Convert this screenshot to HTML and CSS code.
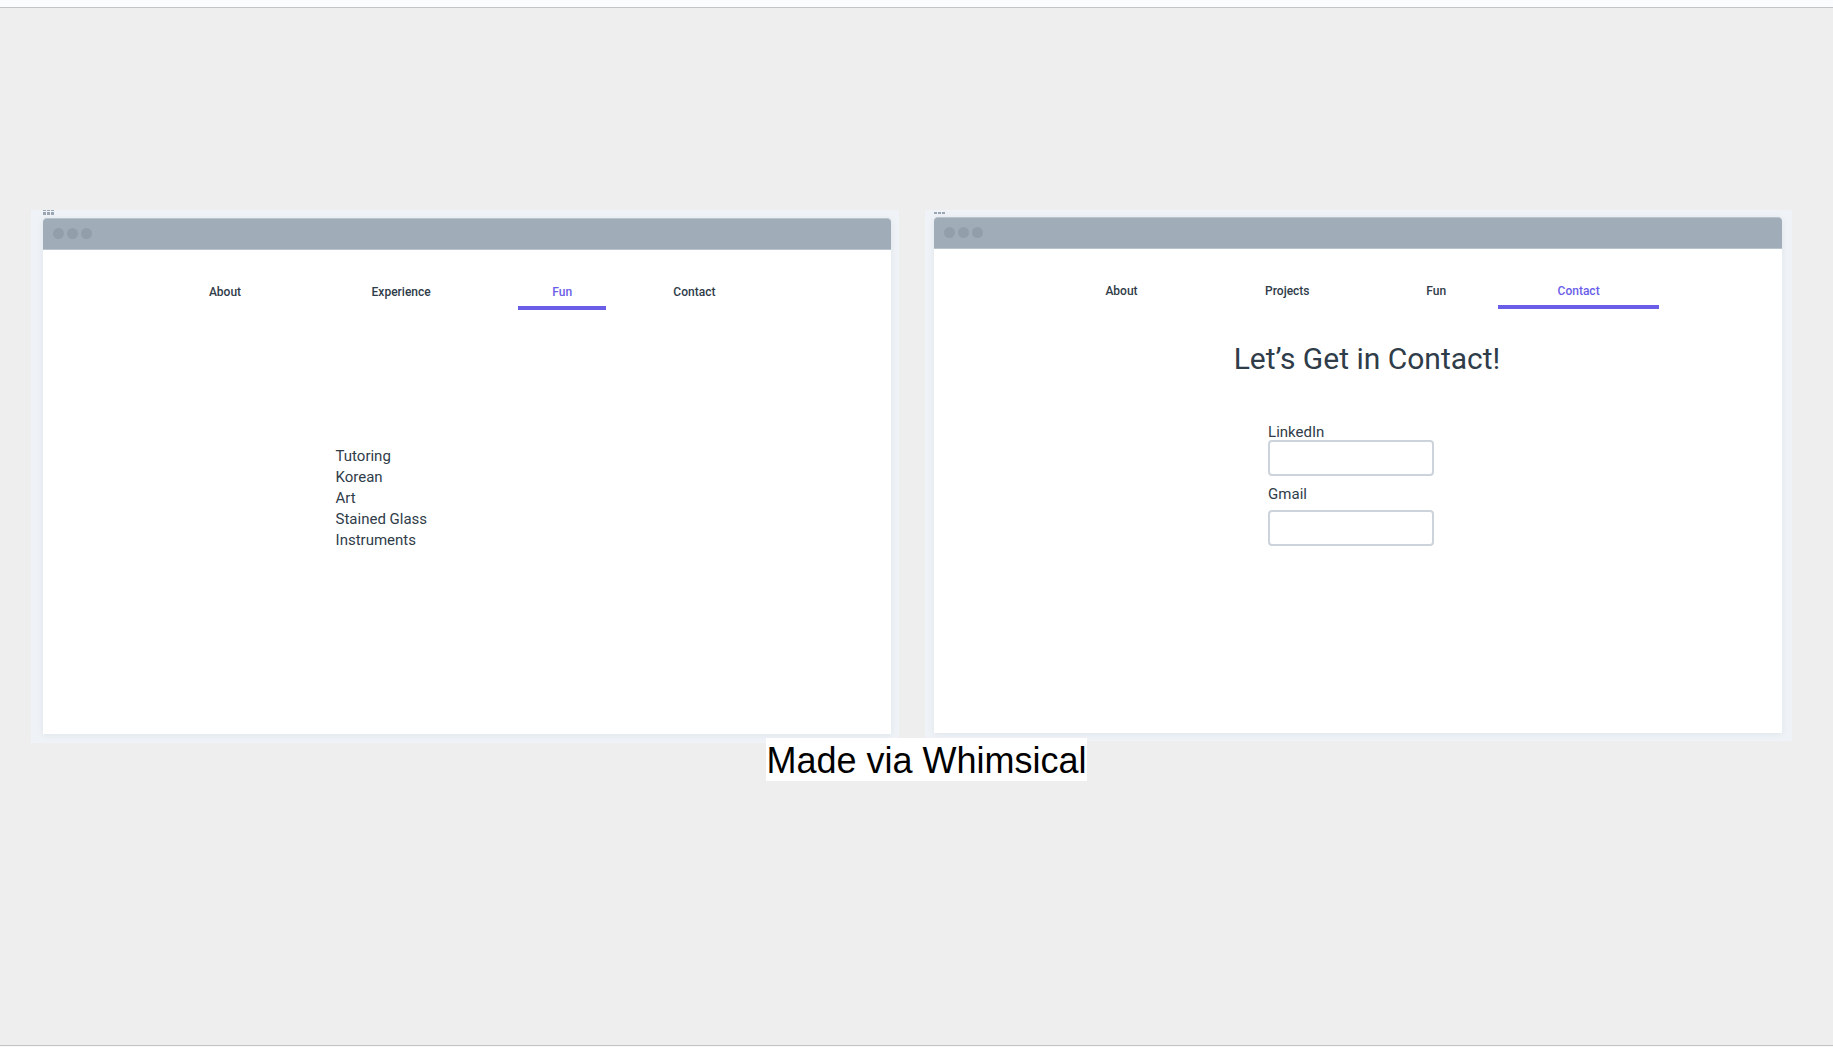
FILE: index.html
```html
<!DOCTYPE html>
<html lang="en">
<head>
<meta charset="utf-8">
<title>Portfolio wireframes</title>
<link rel="stylesheet" href="styles.css">
</head>
<body>
<main class="slide">
  <div class="boards">
    <section class="board board-fun">
      <svg class="handle" width="12" height="8" viewBox="0 0 12 8" aria-hidden="true">
        <path d="M0 0h3v1H0zM4 0h3v1H4zM8 0h3v1H8zM0 2h3v3H0zM4 2h3v3H4zM8 2h3v3H8z"/>
      </svg>
      <div class="window">
        <div class="titlebar"><i class="dot"></i><i class="dot"></i><i class="dot"></i></div>
        <nav class="tabs tabs-fun">
          <a class="tab" href="#about">About</a>
          <a class="tab" href="#experience">Experience</a>
          <a class="tab active" href="#fun">Fun</a>
          <a class="tab" href="#contact">Contact</a>
        </nav>
        <ul class="hobbies">
          <li>Tutoring</li>
          <li>Korean</li>
          <li>Art</li>
          <li>Stained Glass</li>
          <li>Instruments</li>
        </ul>
      </div>
    </section>
    <section class="board board-contact">
      <svg class="handle" width="12" height="7" viewBox="0 0 12 7" aria-hidden="true">
        <path d="M0 2h3v2H0zM4 2h3v2H4zM8 2h3v2H8z"/>
      </svg>
      <div class="window">
        <div class="titlebar"><i class="dot"></i><i class="dot"></i><i class="dot"></i></div>
        <nav class="tabs tabs-contact">
          <a class="tab" href="#about">About</a>
          <a class="tab" href="#projects">Projects</a>
          <a class="tab" href="#fun">Fun</a>
          <a class="tab active" href="#contact">Contact</a>
        </nav>
        <h1 class="heading">Let’s Get in Contact!</h1>
        <form class="form">
          <label class="label" for="linkedin">LinkedIn</label>
          <input class="field" id="linkedin" type="text">
          <label class="label label-spaced" for="gmail">Gmail</label>
          <input class="field" id="gmail" type="email">
        </form>
      </div>
    </section>
  </div>
  <p class="caption">Made via Whimsical</p>
</main>
</body>
</html>
```
FILE: styles.css
```css
* {
  box-sizing: border-box;
}

body {
  margin: 0;
  min-height: 100vh;
  display: flex;
  flex-direction: column;
  background: #eee;
  color: #2f3c49;
  font-family: Roboto, "Liberation Sans", sans-serif;
  border-top: 7px solid #fafcfe;
  border-bottom: 1px solid #fafafa;
}

.slide {
  flex: 1;
  display: flex;
  flex-direction: column;
  align-items: center;
  border-top: 1px solid #c3c3c3;
  border-bottom: 1px solid #c3c3c3;
}

.boards {
  align-self: stretch;
  display: flex;
  align-items: flex-start;
  gap: 26px;
  padding: 202px 41px 0 31px;
}

.board {
  flex: 1;
  background: #eff3f7;
}

.board-fun {
  padding: 0 8px 9px 12px;
}

.board-contact {
  padding: 0 10px 8px 9px;
}

.handle {
  display: block;
  fill: #9aa6b4;
}

.window {
  aspect-ratio: 848 / 516;
  background: #fff;
  border-radius: 4px 4px 0 0;
  box-shadow: 0 1px 6px #dde4ea;
}

.titlebar {
  display: flex;
  align-items: center;
  gap: 3px;
  height: 32px;
  padding: 0 0 2px 10px;
  background: #a0acb8;
  border-top: 1px solid #b9c3cc;
  border-bottom: 1px solid #b9c3cc;
  border-radius: 4px 4px 0 0;
}

.dot {
  width: 11px;
  height: 11px;
  border-radius: 50%;
  background: #929faa;
}

.tabs {
  display: grid;
}

.tabs-fun {
  grid-template-columns: 118fr 234fr 88fr 176fr;
  margin: 0 12.8% 0 14.5%;
}

.tabs-contact {
  grid-template-columns: 158fr 174fr 124fr 161fr;
  margin: 0 14.5% 0 12.8%;
}

.tab {
  height: 60px;
  padding-top: 34px;
  border-bottom: 4px solid transparent;
  color: inherit;
  font-size: 12px;
  font-weight: 500;
  line-height: 16px;
  text-align: center;
  text-decoration: none;
}

.tab.active {
  color: #6a5ee8;
  border-color: #6a5ee8;
}

.hobbies {
  margin: 136px 0 0;
  padding: 0 0 0 34.5%;
  list-style: none;
  font-size: 15px;
  line-height: 21px;
}

.heading {
  margin: 30px 0 0;
  padding-left: 18px;
  font-size: 30px;
  line-height: 40px;
  font-weight: 400;
  text-align: center;
}

.form {
  display: flex;
  flex-direction: column;
  width: 166px;
  margin: 45px 0 0 39.4%;
}

.label {
  font-size: 15px;
  line-height: 16px;
}

.label-spaced {
  margin: 10px 0 8px;
}

.field {
  width: 100%;
  height: 36px;
  padding: 0 8px;
  border: 2px solid #ccd3da;
  border-radius: 4px;
  background: #fff;
  color: inherit;
  font: inherit;
  font-size: 15px;
}

.caption {
  position: relative;
  margin: -5px 0 0 20px;
  padding-top: 2px;
  background: #fff;
  color: #000;
  font-family: "Liberation Sans", Arial, sans-serif;
  font-size: 36px;
  line-height: 41px;
}
```
